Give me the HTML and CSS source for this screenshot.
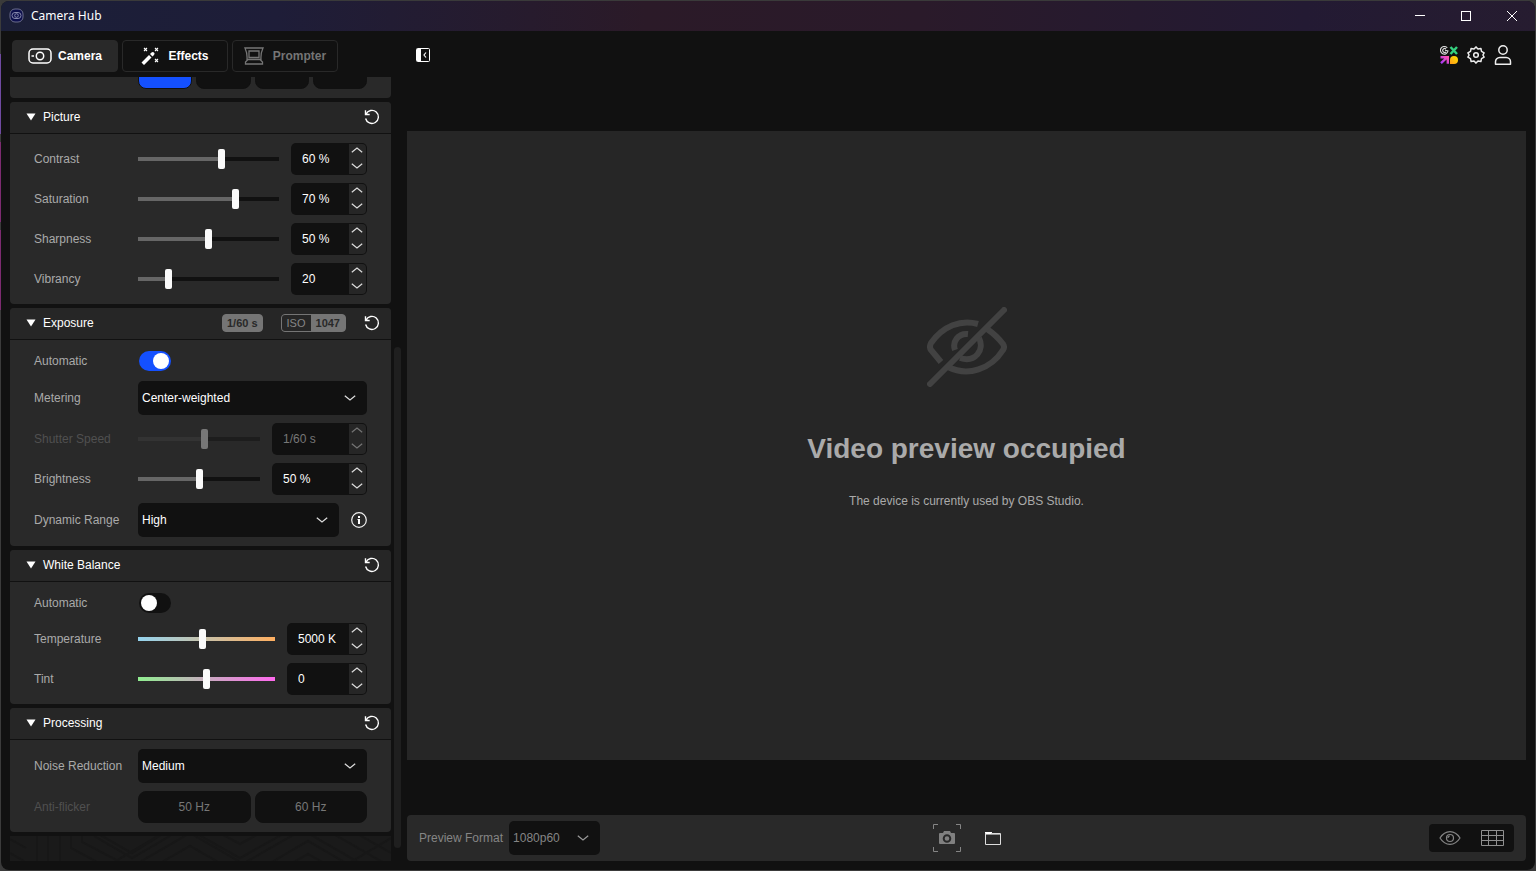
FILE: index.html
```html
<!DOCTYPE html>
<html lang="en">
<head>
<meta charset="utf-8">
<title>Camera Hub</title>
<link rel="stylesheet" href="styles.css">
</head>
<body>
<svg class="defs" aria-hidden="true">
  <symbol id="up" viewBox="0 0 12 6"><path d="M.8 5.300 6 1l5.200 4.300" fill="none" stroke="currentColor" stroke-width="1.200"/></symbol>
  <symbol id="down" viewBox="0 0 12 6"><path d="M.8.7 6 5 11.200.7" fill="none" stroke="currentColor" stroke-width="1.200"/></symbol>
  <symbol id="reset" viewBox="0 0 16 16"><path d="M1.500 1.300v4.200h4.200M2 5.200A6.500 6.500 0 1 1 1.600 9.500" fill="none" stroke="currentColor" stroke-width="1.400"/></symbol>
  <symbol id="tri" viewBox="0 0 10 8"><path d="M.5.5h9L5 7.500z" fill="currentColor"/></symbol>
</svg>
<div class="window">
  <header class="titlebar">
    <svg class="app-icon" width="16" height="16" viewBox="0 0 16 16" fill="none"><rect x="1" y="1" width="13" height="13" rx="5" fill="#0d0f4d" stroke="#6b6d8c"/><rect x="3" y="4.500" width="9" height="6" rx="3" stroke="#8587ac"/><circle cx="7.500" cy="7.500" r="1.800" stroke="#8587ac"/></svg>
    <span class="title">Camera Hub</span>
    <button class="win" aria-label="Minimize"><svg width="10" height="10"><path d="M0 4.500h10" stroke="#fff"/></svg></button>
    <button class="win" aria-label="Maximize"><svg width="10" height="10"><rect x=".5" y=".5" width="9" height="9" fill="none" stroke="#fff"/></svg></button>
    <button class="win" aria-label="Close"><svg width="10" height="10"><path d="m0 0 10 10M10 0 0 10" stroke="#fff"/></svg></button>
  </header>
  <div class="content">
    <aside class="sidebar">
      <nav class="tabs">
        <button class="tab active"><svg width="24" height="16" viewBox="0 0 24 16" fill="none" stroke="currentColor" stroke-width="1.500"><rect x="1" y="1" width="22" height="14" rx="4"/><circle cx="12" cy="8" r="3.700"/><path d="M3.500 8H6"/></svg>Camera</button>
        <button class="tab effects"><svg width="18" height="18" viewBox="0 0 18 18"><path d="m.5 15.500 7.500-7.500 2.500 2.500-7.500 7.500zM9 7l1.500-1.500a1.700 1.700 0 0 1 2.500 2.500L11.500 9.500z" fill="currentColor"/><path d="m3 1 3 3m0-3L3 4m11-3 3 3m0-3-3 3m0 8 3 3m0-3-3 3" stroke="currentColor" stroke-width="1.100"/></svg>Effects</button>
        <button class="tab effects" disabled><svg width="20" height="18" viewBox="0 0 20 18" fill="none" stroke="currentColor" stroke-width="1.300"><path d="M1 1h18Q16.500 6.500 17 12.500H3Q3.500 6.500 1 1zM5 4h10v6.500H5zM4 12.500 1.500 15v2h17v-2L16 12.500"/></svg>Prompter</button>
      </nav>
      <div class="scroll-area">
        <div class="panels">
          <section class="panel clipped">
            <div class="segments">
              <button class="seg on" aria-label="Option 1"></button><button class="seg" aria-label="Option 2"></button><button class="seg" aria-label="Option 3"></button><button class="seg" aria-label="Option 4"></button>
            </div>
          </section>

          <section class="panel">
            <header class="panel-head"><button class="fold"><svg width="10" height="8"><use href="#tri"/></svg>Picture</button><button class="reset" aria-label="Reset picture"><svg width="16" height="16"><use href="#reset"/></svg></button></header>
            <div class="panel-body">
              <div class="row"><label for="contrast">Contrast</label><input id="contrast" type="range" value="60" style="--p:60%"><div class="spin"><input type="text" value="60 %" aria-label="Contrast value"><div class="steps"><button aria-label="Increase"><svg width="12" height="6"><use href="#up"/></svg></button><button aria-label="Decrease"><svg width="12" height="6"><use href="#down"/></svg></button></div></div></div>
              <div class="row"><label for="saturation">Saturation</label><input id="saturation" type="range" value="70" style="--p:70%"><div class="spin"><input type="text" value="70 %" aria-label="Saturation value"><div class="steps"><button aria-label="Increase"><svg width="12" height="6"><use href="#up"/></svg></button><button aria-label="Decrease"><svg width="12" height="6"><use href="#down"/></svg></button></div></div></div>
              <div class="row"><label for="sharpness">Sharpness</label><input id="sharpness" type="range" value="50" style="--p:50%"><div class="spin"><input type="text" value="50 %" aria-label="Sharpness value"><div class="steps"><button aria-label="Increase"><svg width="12" height="6"><use href="#up"/></svg></button><button aria-label="Decrease"><svg width="12" height="6"><use href="#down"/></svg></button></div></div></div>
              <div class="row"><label for="vibrancy">Vibrancy</label><input id="vibrancy" type="range" value="20" style="--p:20%"><div class="spin"><input type="text" value="20" aria-label="Vibrancy value"><div class="steps"><button aria-label="Increase"><svg width="12" height="6"><use href="#up"/></svg></button><button aria-label="Decrease"><svg width="12" height="6"><use href="#down"/></svg></button></div></div></div>
            </div>
          </section>

          <section class="panel">
            <header class="panel-head"><button class="fold"><svg width="10" height="8"><use href="#tri"/></svg>Exposure</button><span class="badge"><b>1/60 s</b></span><span class="badge iso"><span>ISO</span><b>1047</b></span><button class="reset" aria-label="Reset exposure"><svg width="16" height="16"><use href="#reset"/></svg></button></header>
            <div class="panel-body">
              <div class="row short"><label for="auto-exp">Automatic</label><input id="auto-exp" class="toggle" type="checkbox" checked></div>
              <div class="row"><label for="metering">Metering</label><div class="select"><select id="metering"><option>Center-weighted</option></select><svg width="12" height="6"><use href="#down"/></svg></div></div>
              <div class="row disabled"><label for="shutter">Shutter Speed</label><input id="shutter" type="range" value="55" style="--p:55%" disabled><div class="spin wide"><input type="text" value="1/60 s" aria-label="Shutter speed value" disabled><div class="steps"><button aria-label="Increase" disabled><svg width="12" height="6"><use href="#up"/></svg></button><button aria-label="Decrease" disabled><svg width="12" height="6"><use href="#down"/></svg></button></div></div></div>
              <div class="row"><label for="brightness">Brightness</label><input id="brightness" type="range" value="50" style="--p:50%"><div class="spin wide"><input type="text" value="50 %" aria-label="Brightness value"><div class="steps"><button aria-label="Increase"><svg width="12" height="6"><use href="#up"/></svg></button><button aria-label="Decrease"><svg width="12" height="6"><use href="#down"/></svg></button></div></div></div>
              <div class="row"><label for="range">Dynamic Range</label><div class="select"><select id="range"><option>High</option></select><svg width="12" height="6"><use href="#down"/></svg></div><button aria-label="About dynamic range"><svg width="16" height="16" viewBox="0 0 16 16"><circle cx="8" cy="8" r="7.300" fill="none" stroke="#f0f0f0" stroke-width="1.200"/><path d="M7 4h2v2H7zM6.500 7H9v5H7V8h-.5z" fill="#fff"/></svg></button></div>
            </div>
          </section>

          <section class="panel">
            <header class="panel-head"><button class="fold"><svg width="10" height="8"><use href="#tri"/></svg>White Balance</button><button class="reset" aria-label="Reset white balance"><svg width="16" height="16"><use href="#reset"/></svg></button></header>
            <div class="panel-body">
              <div class="row short"><label for="auto-wb">Automatic</label><input id="auto-wb" class="toggle" type="checkbox"></div>
              <div class="row"><label for="temp">Temperature</label><input id="temp" class="temp" type="range" value="47"><div class="spin mid"><input type="text" value="5000 K" aria-label="Temperature value"><div class="steps"><button aria-label="Increase"><svg width="12" height="6"><use href="#up"/></svg></button><button aria-label="Decrease"><svg width="12" height="6"><use href="#down"/></svg></button></div></div></div>
              <div class="row"><label for="tint">Tint</label><input id="tint" class="tint" type="range" value="50"><div class="spin mid"><input type="text" value="0" aria-label="Tint value"><div class="steps"><button aria-label="Increase"><svg width="12" height="6"><use href="#up"/></svg></button><button aria-label="Decrease"><svg width="12" height="6"><use href="#down"/></svg></button></div></div></div>
            </div>
          </section>

          <section class="panel">
            <header class="panel-head"><button class="fold"><svg width="10" height="8"><use href="#tri"/></svg>Processing</button><button class="reset" aria-label="Reset processing"><svg width="16" height="16"><use href="#reset"/></svg></button></header>
            <div class="panel-body">
              <div class="row"><label for="noise">Noise Reduction</label><div class="select"><select id="noise"><option>Medium</option></select><svg width="12" height="6"><use href="#down"/></svg></div></div>
              <div class="row disabled"><span class="label">Anti-flicker</span><div class="segments"><button class="seg" disabled>50 Hz</button><button class="seg" disabled>60 Hz</button></div></div>
            </div>
          </section>

          <svg class="pattern" viewBox="0 0 381 25" preserveAspectRatio="xMidYMid slice" fill="none" stroke="#171717" stroke-width="2" aria-hidden="true">
            <path d="M27-2v28M38-2v28M50-2v28M61-2v14l26 14M72-2v8l38 20M0 3l16 9M0 17l14 8M84 0l38 22 38-22M78-8l44 25 40-25M104 26l44-26M130 26l50-29 50 29M152 26l28-16 28 16M180-6l50 28 50-28M204-6l26 14 26-14M236 26l56-32M262 26l36-21 36 21M284 26l14-8 14 8M296-4l52 30M320-4l61 35M344-4l37 21M381 2l-40 24"/>
          </svg>
        </div>
        <div class="scrollbar"><div class="thumb"></div></div>
      </div>
    </aside>

    <main class="main">
      <header class="topbar">
        <button class="icon-btn" aria-label="Collapse sidebar"><svg width="14" height="14"><rect x=".5" y=".5" width="13" height="13" rx="1" fill="none" stroke="#fff"/><path d="M1 1h4v12H1z" fill="#fff"/><path d="M10 4.500 8 7l2 2.500" fill="none" stroke="#fff" stroke-width="1.200"/></svg></button>
        <div class="top-icons">
          <button class="icon-btn" aria-label="Marketplace"><svg width="18" height="18" viewBox="0 0 18 18" fill="none"><defs><linearGradient id="pk" x1="0" y1="1" x2="1" y2="0"><stop stop-color="#9a35ff"/><stop offset="1" stop-color="#ff50b0"/></linearGradient><linearGradient id="yl" x1="0" y1="1" x2="1" y2="0"><stop stop-color="#ff9a18"/><stop offset="1" stop-color="#ffe600"/></linearGradient></defs><path d="M7.300 2A3.800 3.800 0 1 0 8 5L5 4.300M6 3.100a1.900 1.900 0 1 0 0 2.700" stroke="#ddd" stroke-width="1.100"/><path d="m10.500 1 6.500 7m0-7-6.500 7" stroke="#35d07f" stroke-width="2.500"/><path d="M1 17.200 7.500 11M.5 11.200h7.300v6.600" stroke="url(#pk)" stroke-width="2.400"/><path d="M10 18v-4a4 4 0 1 1 4 4z" fill="url(#yl)"/></svg></button>
          <button class="icon-btn" aria-label="Settings"><svg width="18" height="18" viewBox="0 0 18 18" fill="none" stroke="#eee" stroke-width="1.500" stroke-linejoin="round"><path d="M9 .9 11 3l2.900-.6.600 2.900 2.600 1.500L15.900 9l1.200 2.200-2.600 1.500-.6 2.900L11 15l-2 2.100L7 15l-2.900.6-.6-2.900-2.600-1.500L2.100 9 .9 6.800l2.600-1.500.6-2.900L7 3z"/><circle cx="9" cy="9" r="2.300"/></svg></button>
          <button class="icon-btn" aria-label="Account"><svg width="18" height="20" viewBox="0 0 18 20" fill="none" stroke="#eee" stroke-width="1.500"><circle cx="9" cy="5" r="4.200"/><path d="M1.500 19.200v-2.400c0-2.300 1.800-4.300 4.300-4.300h6.400c2.500 0 4.300 2 4.300 4.300v2.400z" stroke-linejoin="round"/></svg></button>
        </div>
      </header>
      <div class="stage">
        <div class="video">
          <svg class="occupied" width="80" height="80" viewBox="0 0 80 80" fill="none" stroke="#424242" stroke-width="6"><path d="M51 17C34 12 16 19 4 36q-2 4 0 7l10 12M60 22q9 6 16 15 2 3 0 6C64 62 41 70 21 60M41 27C31 26 25 35 28 43M52 31C58 43 48 56 33 51" /><path d="M3 77 77 3" stroke-linecap="round"/></svg>
          <h1>Video preview occupied</h1>
          <p>The device is currently used by OBS Studio.</p>
        </div>
      </div>
      <footer class="bottombar">
        <div class="format"><label for="format">Preview Format</label><div class="select"><select id="format"><option>1080p60</option></select><svg width="12" height="6"><use href="#down"/></svg></div></div>
        <div class="actions">
          <button class="icon-btn" aria-label="Take snapshot"><svg width="28" height="28" fill="none" stroke="#858585"><path d="M.5 5V.5H5M23 .5h4.500V5M.5 23v4.500H5m18 0h4.500V23"/><path d="M7 9h3l1-2h6l1 2h3q1 0 1 1v9q0 1-1 1H7q-1 0-1-1v-9q0-1 1-1z" fill="#808080" stroke="none"/><circle cx="14" cy="14.500" r="3.300" fill="#808080" stroke="#292929" stroke-width="2"/></svg></button>
          <button class="icon-btn" aria-label="Open folder"><svg width="16" height="13"><path d="M0 0h7v2H0z" fill="#fff"/><path d="M.5 1v11.500h15v-11H6" fill="none" stroke="#ddd"/><path d="M1 2.500h14" stroke="#999"/></svg></button>
        </div>
        <div class="view">
          <button class="icon-btn" aria-label="Toggle preview"><svg width="22" height="14" fill="none" stroke="#858585" stroke-width="1.200"><path d="M1 7Q5 .7 11 .7T21 7q-4 6.300-10 6.300T1 7z"/><circle cx="11" cy="7" r="3.500"/><path d="M9 7q0-2 2-2"/></svg></button>
          <button class="icon-btn" aria-label="Toggle grid"><svg width="23" height="16" fill="none" stroke="#909090"><path d="M.5.5h22v15H.5zM7.500 0v16M15.500 0v16M0 5.500h23M0 10.500h23"/></svg></button>
        </div>
      </footer>
    </main>
  </div>
</div>
</body>
</html>
```
FILE: styles.css
```css
* { box-sizing: border-box; }

body {
  margin: 0;
  height: 100vh;
  padding: 1px;
  display: flex;
  font: 12px/16px "Liberation Sans", Arial, sans-serif;
  color: #fff;
  background:
    linear-gradient(#3b3b3b 0 54px, #6f4aa0 54px 134px, #3b3b3b 134px 142px, #7c2b70 142px 222px, #3b3b3b 222px 230px, #7c2b70 230px 310px, #3b3b3b 310px) left / 1px 100% no-repeat,
    #3a3a3a;
}

button, input, select { font: inherit; color: inherit; margin: 0; }
button { padding: 0; border: 0; background: none; }
svg { display: block; flex: none; }
.defs { display: none; }

.window {
  flex: 1;
  display: flex;
  flex-direction: column;
  min-width: 0;
  border-radius: 8px;
  overflow: hidden;
  background: #111;
}

.titlebar {
  display: flex;
  align-items: center;
  height: 30px;
  padding-left: 8px;
  font: 12px/16px "Noto Sans", "Open Sans", sans-serif;
  background: linear-gradient(90deg, #1b1f38 0, #1e1d38 18%, #2b1a28 42%, #2a1a2a 60%, #231a33 85%, #261c30 100%);
}
.title { flex: 1; padding-left: 6px; }
.win { width: 46px; height: 28px; display: grid; place-items: center; }

.content { flex: 1; display: flex; gap: 6px; padding: 0 9px; min-height: 0; }

.sidebar { width: 391px; display: flex; flex-direction: column; flex: none; }
.tabs { display: flex; gap: 4px; padding: 9px 2px 5px; }
.tab {
  width: 106px;
  height: 32px;
  display: flex;
  align-items: center;
  justify-content: center;
  gap: 6px;
  border: 1px solid #292929;
  border-radius: 4px;
  font-weight: bold;
}
.tab.effects { gap: 9px; }
.tab.active { background: #292929; }
.tab:disabled { color: #757575; }

.scroll-area { flex: 1; display: flex; gap: 3px; min-height: 0; padding-bottom: 9px; }
.panels { flex: 1; display: flex; flex-direction: column; gap: 4px; overflow: hidden; }
.scrollbar { width: 7px; display: flex; flex-direction: column; }
.scrollbar::before { content: ""; flex: 270; }
.scrollbar::after { content: ""; flex: 13; }
.thumb { flex: 501; border-radius: 4px; background: #1f1f1f; }

.panel { flex: none; border-radius: 4px; background: #292929; }
.clipped {
  height: 21px;
  display: flex;
  align-items: flex-end;
  padding: 0 24px 9px 128px;
  border-radius: 0 0 4px 4px;
  overflow: hidden;
}
.panel-head {
  height: 32px;
  display: flex;
  align-items: center;
  gap: 18px;
  padding: 0 11px 2px 16px;
  border-bottom: 1px solid #111;
  border-radius: 4px 4px 0 0;
  background: #262626;
}
.fold { flex: 1; display: flex; align-items: center; gap: 7px; }
.badge { height: 18px; display: flex; border: 1px solid #757575; border-radius: 4px; background: #757575; color: #292929; font-size: 11px; line-height: 16px; }
.badge b { padding: 0 4px; }
.badge span { padding: 0 5px; border-radius: 3px 0 0 3px; background: #262626; color: #858585; }
.iso b { padding: 0 5px; }

.panel-body { display: flex; flex-direction: column; gap: 8px; padding: 9px 24px; }
.row { display: flex; align-items: center; gap: 12px; color: #fff; }
.row.short { height: 24px; }
.row > label, .label { width: 92px; flex: none; color: #aaa; white-space: nowrap; }
.disabled > label, .disabled > .label { color: #505050; }

input[type="range"] {
  appearance: none;
  flex: 1;
  min-width: 0;
  height: 20px;
  background-color: transparent;
  background-image: linear-gradient(90deg, #666 var(--p), #111 var(--p));
  background-position: center;
  background-size: 100% 4px;
  background-repeat: no-repeat;
}
input[type="range"]::-webkit-slider-thumb { appearance: none; width: 7px; height: 20px; border-radius: 2px; background: #fafafa; }
input[type="range"]:disabled { background-image: linear-gradient(90deg, #333 var(--p), #1d1d1d var(--p)); }
input[type="range"]:disabled::-webkit-slider-thumb { background: #777; }
input[type="range"].temp { background-image: linear-gradient(90deg, #94d3ee, #ffaf60); }
input[type="range"].tint { background-image: linear-gradient(90deg, #90ee90, #ff69ee); }

.spin { width: 76px; height: 32px; display: flex; padding: 1px; border-radius: 5px; background: #111; }
.spin.mid { width: 80px; }
.spin.wide { width: 95px; }
.spin input { flex: 1; min-width: 0; padding: 0 0 0 10px; border: 0; background: none; }
.spin input:disabled { color: #777; }
.steps { width: 17px; display: flex; flex-direction: column; justify-content: space-between; padding: 2px 0 4px; border-radius: 0 4px 4px 0; background: #262626; color: #ddd; }
.steps button { height: 8px; padding-left: 2px; }
.steps button:disabled { color: #757575; }

.toggle { appearance: none; width: 32px; height: 20px; margin-left: 1px; padding: 2px; display: flex; border-radius: 10px; background: #111; }
.toggle::before { content: ""; width: 16px; height: 16px; border-radius: 50%; background: #fff; }
.toggle:checked { justify-content: flex-end; background: #1450ff; }

.select { position: relative; flex: 1; height: 34px; }
.select select { appearance: none; width: 100%; height: 100%; padding: 0 30px 0 4px; border: 0; border-radius: 5px; background: #111; }
.select svg { position: absolute; right: 11px; top: 14px; color: #ddd; pointer-events: none; }

.segments { flex: 1; display: flex; gap: 4px; }
.seg { flex: 1; height: 32px; border: 1px solid #111; border-radius: 8px; background: #111; }
.seg:disabled { color: #777; }
.seg.on { background: #1450ff; }

.pattern { width: 100%; flex: 1; min-height: 0; background: #1a1a1a; }

.main { flex: 1; min-width: 0; display: flex; flex-direction: column; padding-bottom: 9px; }
.topbar { height: 48px; display: flex; align-items: center; justify-content: space-between; padding: 0 14px 0 9px; }
.top-icons { display: flex; align-items: center; gap: 9px; }
.stage { flex: 1; min-height: 0; display: grid; align-items: center; padding-bottom: 3px; }
.video {
  aspect-ratio: 16 / 9;
  max-height: 100%;
  display: flex;
  flex-direction: column;
  align-items: center;
  justify-content: center;
  color: #aaa;
  background: #262626;
}
.video h1 { margin: 46px 0 28px; font-size: 28px; line-height: 32px; }
.video p { margin: 0 0 76px; }

.bottombar { height: 46px; display: grid; grid-template-columns: 1fr auto 1fr; align-items: center; padding: 0 12px; border-radius: 4px; background: #292929; }
.format { display: flex; align-items: center; gap: 6px; color: #858585; }
.format .select { flex: none; width: 91px; }
.format .select svg { color: #999; }
.actions { display: flex; align-items: center; gap: 24px; }
.view { justify-self: end; height: 28px; display: flex; align-items: center; gap: 20px; padding: 0 10px; border-radius: 4px; background: #111; }
```
